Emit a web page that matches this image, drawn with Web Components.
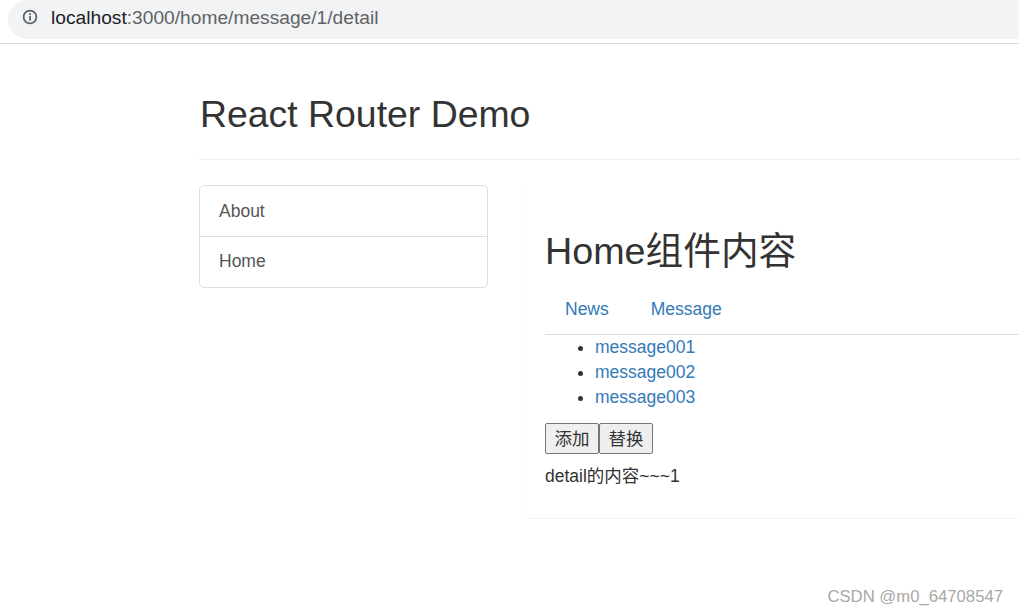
<!DOCTYPE html>
<html lang="zh">
<head>
<meta charset="utf-8">
<title>React Router Demo</title>
<style>
  html, body { margin: 0; height: 100%; background: #fff; overflow: hidden; }
  body {
    font-family: "Liberation Sans", "Noto Sans CJK SC", sans-serif;
    font-size: 17.5px;
    color: #333;
  }
</style>
</head>
<body>
<address-bar url-host="localhost" url-path=":3000/home/message/1/detail"></address-bar>
<demo-app></demo-app>
<water-mark>CSDN @m0_64708547</water-mark>

<script>
class AddressBar extends HTMLElement {
  constructor() {
    super();
    this.attachShadow({ mode: "open" });
    this.shadowRoot.innerHTML = `
      <style>
      :host { display: block; height: 43px; padding-left: 8px; border-bottom: 1px solid #dcdcdc; }
      .pill {
        display: flex;
        align-items: center;
        height: 39px;
        padding: 0 0 3px 14px;
        box-sizing: border-box;
        gap: 13px;
        background: #f1f3f4;
        border-radius: 20px 0 0 20px;
        font-size: 19.2px;
        color: #5f6368;
      }
      svg { width: 16px; height: 16px; flex: none; margin-bottom: 2px; }
      b { font-weight: normal; color: #202124; }
      </style>
      <div class="pill">
        <svg viewBox="0 0 16 16" fill="none">
          <circle cx="8" cy="8" r="6.4" stroke="#5f6368" stroke-width="1.8"/>
          <rect x="7.1" y="7" width="1.8" height="4.6" fill="#5f6368"/>
          <rect x="7.1" y="4.2" width="1.8" height="1.8" fill="#5f6368"/>
        </svg>
        <span><b>${this.getAttribute("url-host")}</b>${this.getAttribute("url-path")}</span>
      </div>
    `;
  }
}
customElements.define("address-bar", AddressBar);

class NavList extends HTMLElement {
  constructor() {
    super();
    this.attachShadow({ mode: "open" });
    this.shadowRoot.innerHTML = `
      <style>
      :host { display: block; border: 1px solid #ddd; border-radius: 5px; color: #555; }
      ::slotted(div) { padding: 0 19px; height: 50px; line-height: 50px; }
      ::slotted(div:first-child) { border-bottom: 1px solid #ddd; line-height: 50px; }
      ::slotted(div:last-child) { line-height: 48px; }
      </style>
      <slot></slot>
    `;
  }
}
customElements.define("nav-list", NavList);

class NavTabs extends HTMLElement {
  constructor() {
    super();
    this.attachShadow({ mode: "open" });
    this.shadowRoot.innerHTML = `
      <style>
      :host { display: flex; gap: 42px; height: 50px; line-height: 50px; padding-left: 20px; border-bottom: 1px solid #ddd; color: #337ab7; }
      </style>
      <slot></slot>
    `;
  }
}
customElements.define("nav-tabs", NavTabs);

class MessageList extends HTMLElement {
  constructor() {
    super();
    this.attachShadow({ mode: "open" });
    this.shadowRoot.innerHTML = `
      <style>
      :host { display: block; }
      ul { margin: 0; padding-left: 50px; color: #333; }
      li { height: 25px; line-height: 25px; }
      a { color: #337ab7; text-decoration: none; }
      </style>
      <ul></ul>
    `;
    const ul = this.shadowRoot.querySelector("ul");
    for (const name of this.getAttribute("items").split(",")) {
      const li = document.createElement("li");
      const a = document.createElement("a");
      a.textContent = name;
      li.append(a);
      ul.append(li);
    }
  }
}
customElements.define("message-list", MessageList);

class DemoApp extends HTMLElement {
  constructor() {
    super();
    this.attachShadow({ mode: "open" });
    this.shadowRoot.innerHTML = `
      <style>
      :host { display: block; padding-left: 199px; }
      header { height: 115px; border-bottom: 1px solid #eee; }
      h1 { margin: 0; padding: 48px 0 0 1px; font-size: 37.4px; line-height: 44px; font-weight: 400; color: #333; }
      .row { display: flex; padding-top: 25px; }
      .side { flex: none; width: 289px; }
      .panel {
        flex: 1;
        margin-left: 37px;
        height: 334px;
        box-sizing: border-box;
        padding: 41px 0 0 19px;
        border-left: 1px solid #fbfbfb;
        border-bottom: 1px solid #f2f2f2;
        border-radius: 0 0 0 5px;
      }
      h2 { margin: 0; font-size: 37.7px; line-height: 50px; font-weight: 400; color: #333; }
      .tabs { margin-top: 8px; }
      .actions { display: flex; margin-top: 13px; }
      button {
        box-sizing: border-box;
        width: 54px;
        height: 31px;
        padding: 0 0 3px;
        font: inherit;
        color: #333;
        background: #efefef;
        border: 1px solid #767676;
        border-radius: 2px;
      }
      p { margin: 10px 0 0; line-height: 25px; }
      </style>
      <header><h1>React Router Demo</h1></header>
      <div class="row">
        <div class="side">
          <nav-list><div>About</div><div>Home</div></nav-list>
        </div>
        <section class="panel">
          <h2>Home组件内容</h2>
          <nav-tabs class="tabs"><span>News</span><span>Message</span></nav-tabs>
          <message-list items="message001,message002,message003"></message-list>
          <div class="actions"><button>添加</button><button>替换</button></div>
          <p>detail的内容~~~1</p>
        </section>
      </div>
    `;
  }
}
customElements.define("demo-app", DemoApp);

class WaterMark extends HTMLElement {
  constructor() {
    super();
    this.attachShadow({ mode: "open" });
    this.shadowRoot.innerHTML = `
      <style>
      :host { position: absolute; right: 16px; bottom: 7px; font-size: 16.7px; line-height: 20px; color: #a8a8a8; }
      </style>
      <slot></slot>
    `;
  }
}
customElements.define("water-mark", WaterMark);
</script>
</body>
</html>
